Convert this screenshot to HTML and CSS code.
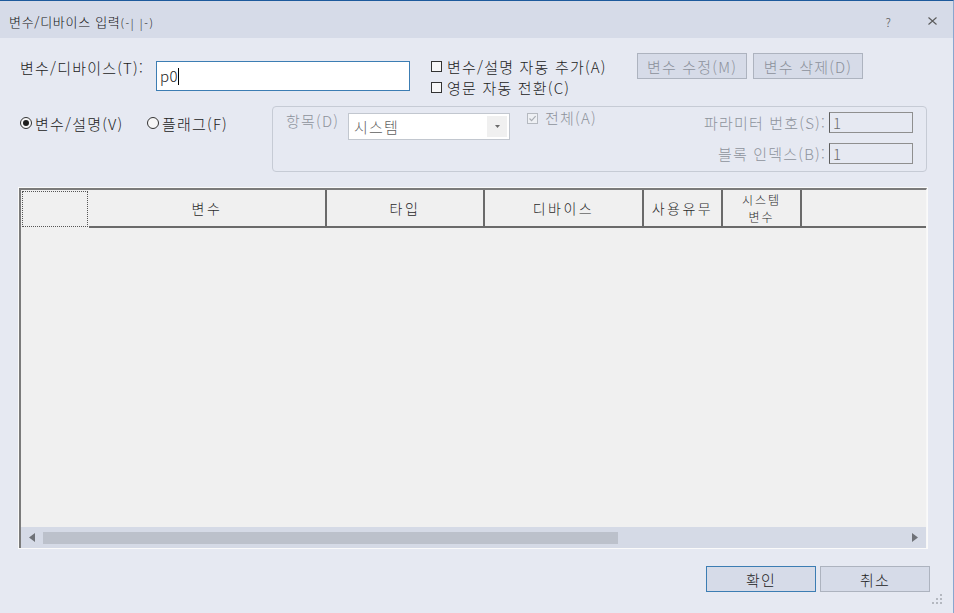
FILE: index.html
```html
<!DOCTYPE html>
<html lang="ko">
<head>
    <meta charset="UTF-8">
    <meta name="viewport" content="width=device-width, initial-scale=1.0">
    <title>변수/디바이스 입력</title>
    <link rel="stylesheet" href="styles.css">
</head>
<body>

    <div class="dialog">
        <!-- 타이틀 바 -->
        <div class="titlebar">
            <div class="title">변수/디바이스 입력<span class="title-sub">(-| |-)</span></div>
            <div class="title-ctrl">
                <span class="help">?</span>
                <svg class="close" width="9" height="8" viewBox="0 0 9 8">
                    <path d="M0.5 0.5 L8.5 7.5 M8.5 0.5 L0.5 7.5" stroke="#5a5a5a" stroke-width="1.1" fill="none"/>
                </svg>
            </div>
        </div>

        <div class="content">
            <!-- 윗줄: 입력 -->
            <div class="row-top">
                <div class="lbl-device">변수/디바이스(T):</div>
                <div class="txt-device">p0<span class="caret"></span></div>
                <div class="checks">
                    <div class="chk"><span class="box"></span>변수/설명 자동 추가(A)</div>
                    <div class="chk"><span class="box"></span>영문 자동 전환(C)</div>
                </div>
                <div class="top-btns">
                    <button class="btn btn-off">변수 수정(M)</button>
                    <button class="btn btn-off">변수 삭제(D)</button>
                </div>
            </div>

            <!-- 가운데 줄: 라디오 + 그룹 -->
            <div class="row-mid">
                <div class="radios">
                    <div class="radio radio-first"><span class="dot on"></span>변수/설명(V)</div>
                    <div class="radio"><span class="dot"></span>플래그(F)</div>
                </div>
                <div class="group">
                    <div class="g-left">
                        <div class="g-label">항목(D)</div>
                        <div class="combo">
                            <span class="combo-text">시스템</span>
                            <span class="combo-drop">
                                <svg width="5" height="3" viewBox="0 0 5 3"><path d="M0 0 H5 L2.5 3 Z" fill="#6a6a6a"/></svg>
                            </span>
                        </div>
                        <div class="chk chk-off">
                            <span class="box box-off">
                                <svg width="9" height="9" viewBox="0 0 9 9"><path d="M1.5 4.5 L3.6 6.6 L7.6 2.2" stroke="#a9adb4" stroke-width="1.2" fill="none"/></svg>
                            </span>전체(A)
                        </div>
                    </div>
                    <div class="g-right">
                        <div class="g-row">
                            <span class="g-label">파라미터 번호(S):</span>
                            <span class="num-box">1</span>
                        </div>
                        <div class="g-row">
                            <span class="g-label">블록 인덱스(B):</span>
                            <span class="num-box">1</span>
                        </div>
                    </div>
                </div>
            </div>

            <!-- 목록 -->
            <div class="grid">
                <div class="grid-inner">
                    <div class="grid-head">
                        <div class="hc hc-0"><span class="focus"></span></div>
                        <div class="hc hc-1">변수</div>
                        <div class="hc hc-2">타입</div>
                        <div class="hc hc-3">디바이스</div>
                        <div class="hc hc-4">사용유무</div>
                        <div class="hc hc-5"><span>시스템</span><span>변수</span></div>
                        <div class="hc hc-6"></div>
                    </div>
                    <div class="grid-body"></div>
                    <div class="hscroll">
                        <svg class="arr-l" width="6" height="9" viewBox="0 0 6 9"><path d="M6 0 V9 L0 4.5 Z" fill="#6f7278"/></svg>
                        <div class="thumb"></div>
                        <svg class="arr-r" width="6" height="9" viewBox="0 0 6 9"><path d="M0 0 V9 L6 4.5 Z" fill="#6f7278"/></svg>
                    </div>
                </div>
            </div>

            <!-- 아래 버튼 -->
            <div class="footer">
                <button class="btn btn-ok">확인</button>
                <button class="btn">취소</button>
            </div>
        </div>

        <svg class="grip" width="10" height="10" viewBox="0 0 10 10">
            <rect x="8" y="0" width="2" height="2" fill="#b4b8c0"/>
            <rect x="4" y="4" width="2" height="2" fill="#b4b8c0"/>
            <rect x="8" y="4" width="2" height="2" fill="#b4b8c0"/>
            <rect x="0" y="8" width="2" height="2" fill="#b4b8c0"/>
            <rect x="4" y="8" width="2" height="2" fill="#b4b8c0"/>
            <rect x="8" y="8" width="2" height="2" fill="#b4b8c0"/>
        </svg>
    </div>

</body>
</html>
```

FILE: styles.css
```css
* {
    box-sizing: border-box;
}
body {
    margin: 0;
    font-family: "Noto Sans CJK KR", "Noto Sans", sans-serif;
    font-size: 15px;
    font-weight: 300;
    letter-spacing: 1.2px;
    color: #222;
}
.dialog {
    position: relative;
    width: 954px;
    height: 613px;
    background-color: #e6e9f2;
    border-top: 1px solid #1d5a9c;
    border-right: 1px solid #8aa6cf;
    display: flex;
    flex-direction: column;
}

/* 타이틀 바 */
.titlebar {
    height: 37px;
    background-color: #d6dbe8;
    display: flex;
    align-items: center;
    padding: 3px 0 0 9px;
}
.title {
    font-size: 13px;
    letter-spacing: 0.7px;
    color: #111;
}
.title .title-sub {
    font-size: 11px;
    letter-spacing: 1.6px;
    position: relative;
    top: 1px;
}
.title-ctrl {
    margin-left: auto;
    display: flex;
    align-items: center;
}
.help {
    font-size: 12px;
    color: #606060;
    margin-right: 36px;
}
.close {
    display: block;
    margin-right: 16px;
}

/* 내용 */
.content {
    flex: 1;
    display: flex;
    flex-direction: column;
    padding: 0 26px 0 20px;
}
.row-top {
    display: flex;
    align-items: flex-start;
    height: 53px;
    margin-top: 15px;
}
.lbl-device {
    width: 136px;
    margin-top: 5px;
    line-height: 20px;
}
.txt-device {
    width: 254px;
    height: 30px;
    margin-top: 8px;
    padding: 0 3px;
    line-height: 28px;
    letter-spacing: 0.5px;
    background-color: #fff;
    border: 1px solid #3c7db3;
    display: flex;
    align-items: center;
}
.caret {
    display: inline-block;
    width: 1px;
    height: 17px;
    background-color: #000;
}
.checks {
    width: 206px;
    margin: 3px 0 0 21px;
}
.chk {
    display: flex;
    align-items: center;
    line-height: 21px;
}
.box {
    width: 11px;
    height: 11px;
    margin-right: 5px;
    border: 1px solid #333;
    background-color: #f7f7f8;
    display: flex;
    align-items: center;
    justify-content: center;
}
.top-btns {
    display: flex;
    gap: 6px;
}
.btn {
    width: 110px;
    height: 26px;
    padding: 0;
    font-family: inherit;
    font-size: 15px;
    font-weight: inherit;
    letter-spacing: inherit;
    color: #222;
    background-color: #d6dbe8;
    border: 1px solid #adb3bf;
    outline: none;
}
.btn-off {
    color: #8c919b;
}
.btn-ok {
    border-color: #3c7db3;
}

/* 라디오 + 그룹 */
.row-mid {
    display: flex;
    height: 66px;
}
.radios {
    width: 252px;
    display: flex;
    padding-top: 7px;
}
.radio {
    display: flex;
    align-items: center;
    height: 20px;
}
.radio-first {
    width: 127px;
}
.dot {
    width: 12px;
    height: 12px;
    margin-right: 3px;
    border: 1px solid #333;
    border-radius: 50%;
    background-color: #f7f7f8;
    display: flex;
    align-items: center;
    justify-content: center;
}
.dot.on::after {
    content: "";
    width: 6px;
    height: 6px;
    border-radius: 50%;
    background-color: #1e1e1e;
}
.group {
    width: 655px;
    height: 66px;
    border: 1px solid #c6cbd5;
    border-radius: 4px;
    display: flex;
    padding: 5px 13px 0 13px;
}
.g-left {
    display: flex;
    align-items: flex-start;
}
.g-label {
    color: #8e939c;
    line-height: 18px;
}
.g-left .g-label {
    width: 62px;
}
.combo {
    width: 162px;
    height: 27px;
    margin-top: 1px;
    background-color: #fff;
    border: 1px solid #c2c7cf;
    display: flex;
    align-items: center;
}
.combo-text {
    padding-left: 5px;
    color: #5f5f5f;
}
.combo-drop {
    margin: 0 2px 0 auto;
    width: 20px;
    height: 21px;
    background-color: #f0f0f0;
    display: flex;
    align-items: center;
    justify-content: center;
}
.chk-off {
    margin-left: 17px;
    line-height: 12px;
    color: #8e939c;
}
.box-off {
    border-color: #b5b9c0;
    background-color: #eef0f4;
    margin-right: 7px;
}
.g-right {
    margin-left: auto;
    display: flex;
    flex-direction: column;
    gap: 10px;
}
.g-row {
    display: flex;
    align-items: center;
    justify-content: flex-end;
}
.num-box {
    width: 84px;
    height: 21px;
    margin-left: 3px;
    padding-left: 3px;
    line-height: 19px;
    color: #6d6d6d;
    border: 1px solid #8f8f8f;
    border-left-color: #5d5d5d;
}

/* 목록 */
.grid {
    width: 910px;
    height: 362px;
    margin: 15px 0 0 -2px;
    border: 1px solid #fafafa;
}
.grid-inner {
    height: 100%;
    display: flex;
    flex-direction: column;
    border-top: 2px solid #7b7b7b;
    border-left: 2px solid #7b7b7b;
    border-right: 1px solid #f7f7f7;
    background-color: #f0f0f0;
}
.grid-head {
    display: flex;
    height: 38px;
    font-size: 14px;
    letter-spacing: 2.5px;
    color: #2a2a2a;
}
.hc {
    display: flex;
    align-items: center;
    justify-content: center;
    text-align: center;
    border-bottom: 2px solid #6a6a6a;
    border-right: 2px solid #6a6a6a;
}
.hc-0 {
    width: 68px;
    border: 0;
    padding: 1px;
}
.hc-0 .focus {
    width: 100%;
    height: 100%;
    border: 1px dotted #555;
}
.hc-1 { width: 238px; }
.hc-2 { width: 158px; }
.hc-3 { width: 159px; }
.hc-4 { width: 79px; }
.hc-5 {
    width: 79px;
    flex-direction: column;
    font-size: 12px;
    line-height: 17px;
    letter-spacing: 2px;
}
.hc-6 { flex: 1; border-right: 0; }
.grid-body {
    flex: 1;
}
.hscroll {
    height: 21px;
    background-color: #d5dae6;
    display: flex;
    align-items: center;
}
.arr-l {
    margin-left: 8px;
}
.thumb {
    width: 575px;
    height: 12px;
    margin-left: 8px;
    background-color: #bcc1cb;
}
.arr-r {
    margin: 0 8px 0 auto;
}

/* 아래 버튼 */
.footer {
    display: flex;
    justify-content: flex-end;
    gap: 4px;
    margin: 17px -3px 0 0;
}

.grip {
    position: absolute;
    right: 11px;
    bottom: 9px;
}
```
